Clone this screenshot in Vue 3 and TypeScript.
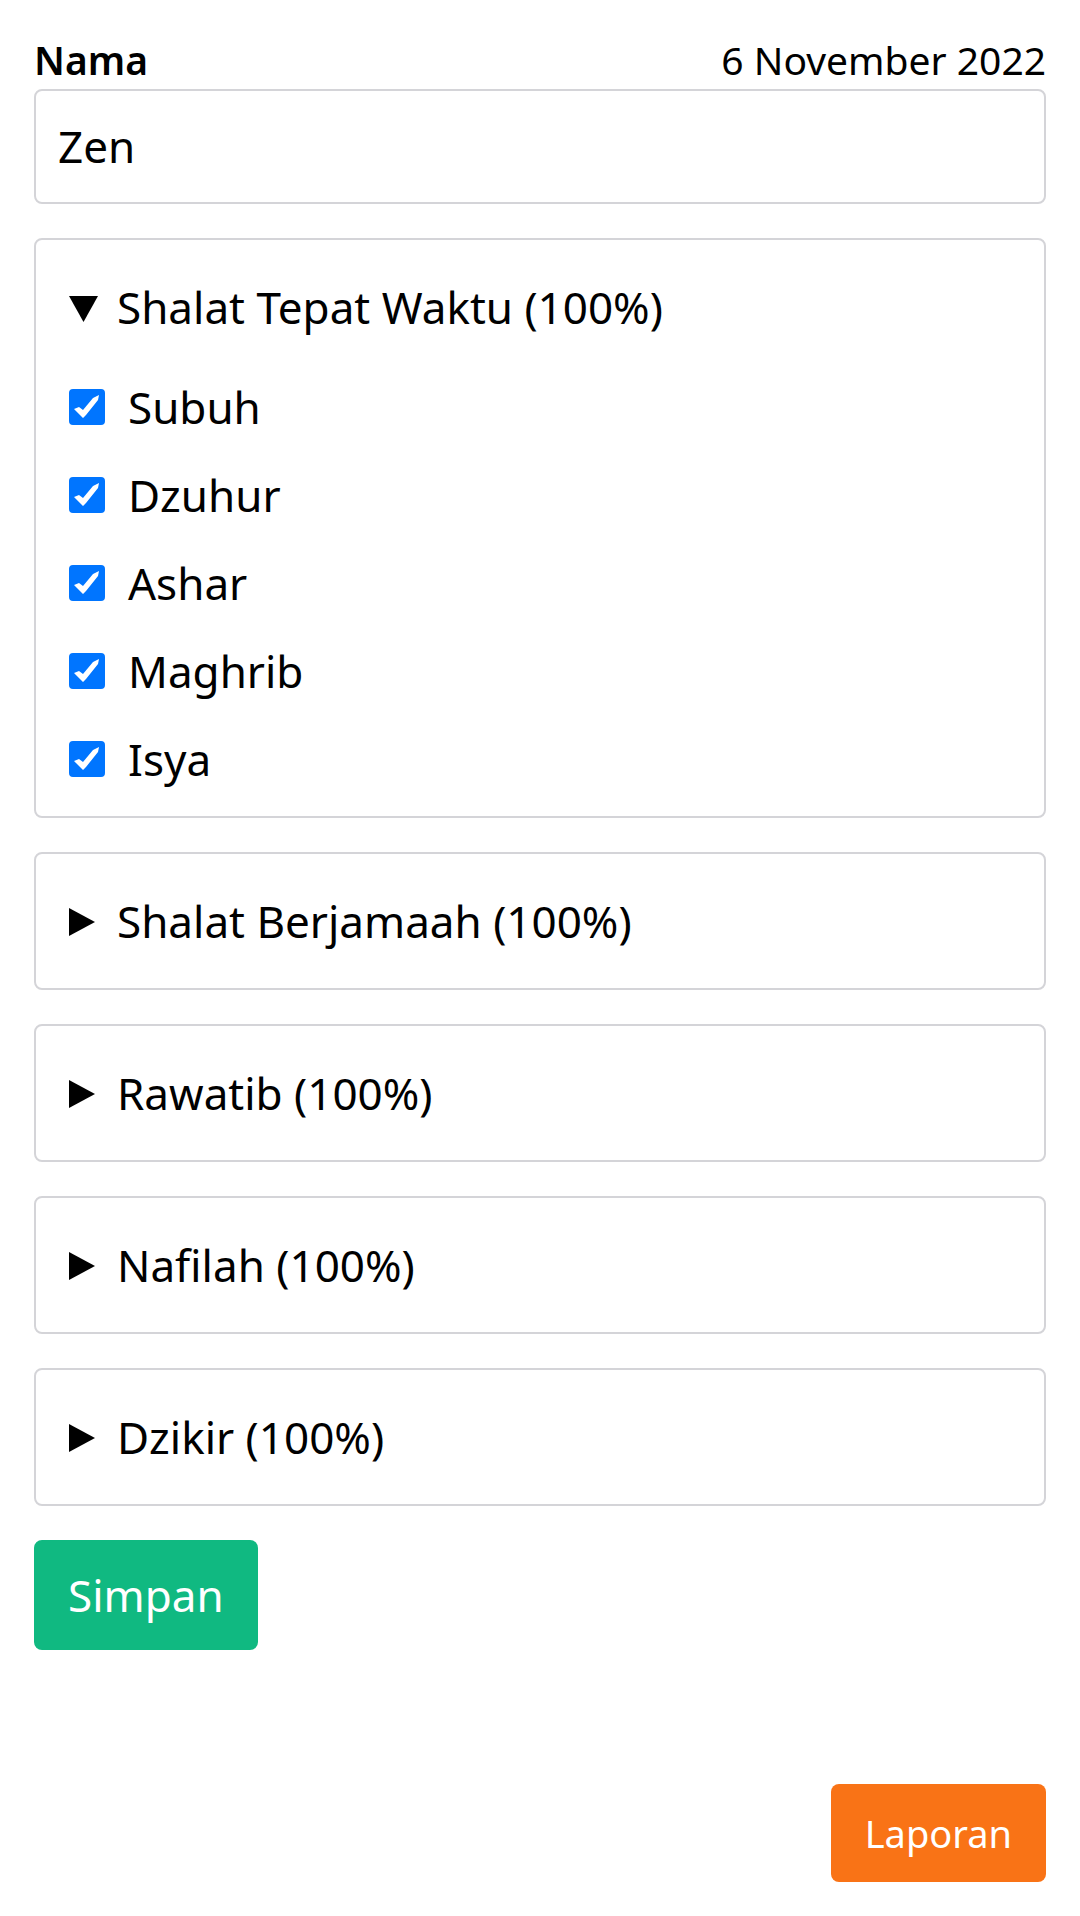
<script setup lang="ts">
import { reactive, ref } from 'vue'

interface Item {
  label: string
  done: boolean
}

interface Group {
  id: string
  title: string
  open: boolean
  items: Item[]
}

function makeItems(...labels: string[]): Item[] {
  return labels.map((label) => ({ label, done: true }))
}

const name = ref('Zen')

const groups = reactive<Group[]>([
  {
    id: 'tepat-waktu',
    title: 'Shalat Tepat Waktu',
    open: true,
    items: makeItems('Subuh', 'Dzuhur', 'Ashar', 'Maghrib', 'Isya'),
  },
  { id: 'berjamaah', title: 'Shalat Berjamaah', open: false, items: [] },
  { id: 'rawatib', title: 'Rawatib', open: false, items: [] },
  { id: 'nafilah', title: 'Nafilah', open: false, items: [] },
  { id: 'dzikir', title: 'Dzikir', open: false, items: [] },
])

function percent(group: Group): number {
  if (group.items.length === 0) return 100
  const done = group.items.filter((item) => item.done).length
  return Math.round((done / group.items.length) * 100)
}

function onToggle(group: Group, event: Event): void {
  group.open = (event.target as HTMLDetailsElement).open
}
</script>

<template>
  <main class="page">
    <form class="form" @submit.prevent>
      <div class="field">
        <div class="field-head">
          <label class="name-label" for="name">Nama</label>
          <time datetime="2022-11-06">6 November 2022</time>
        </div>
        <input id="name" v-model="name" class="name-input" type="text" autocomplete="off" />
      </div>

      <details
        v-for="group in groups"
        :key="group.id"
        class="card"
        :open="group.open"
        @toggle="onToggle(group, $event)"
      >
        <summary class="summary">
          <svg class="marker" viewBox="0 0 30 30" aria-hidden="true">
            <path v-if="group.open" d="M0 4H29L14.5 30Z" />
            <path v-else d="M0 2L26 16L0 30Z" />
          </svg>
          <span>{{ group.title }} ({{ percent(group) }}%)</span>
        </summary>
        <div v-if="group.items.length" class="items">
          <label v-for="item in group.items" :key="item.label" class="item">
            <span class="box">
              <input v-model="item.done" class="check" type="checkbox" />
              <svg class="tick" viewBox="0 0 36 36" aria-hidden="true">
                <path d="M5 20L10 18L14 21L24 9L30 6L29 11L17 26L14 29Z" />
              </svg>
            </span>
            <span>{{ item.label }}</span>
          </label>
        </div>
      </details>

      <button class="button save" type="submit">Simpan</button>
    </form>

    <button class="button report" type="button">Laporan</button>
  </main>
</template>

<style>
body {
  margin: 0;
  background: #fff;
}
</style>

<style scoped>
.page {
  box-sizing: border-box;
  display: flex;
  flex-direction: column;
  min-height: 100vh;
  padding: 33px 34px 34px;
  color: #000;
  font-family: 'Noto Sans', sans-serif;
  font-size: 44px;
  line-height: 66px;
}

.form {
  display: flex;
  flex-direction: column;
  gap: 34px;
}

.field {
  display: flex;
  flex-direction: column;
  gap: 2px;
}

.field-head {
  display: flex;
  justify-content: space-between;
  font-size: 39px;
  line-height: 54px;
}

.name-label {
  font-weight: 600;
}

.name-input {
  box-sizing: border-box;
  width: 100%;
  padding: 22px;
  border: 2px solid #d4d4d8;
  border-radius: 8px;
  outline: none;
  background: #fff;
  color: inherit;
  font: inherit;
  line-height: 67px;
}

.card {
  padding: 34px 33px;
  border: 2px solid #d4d4d8;
  border-radius: 8px;
}

.card[open] {
  padding-bottom: 24px;
}

.summary {
  display: flex;
  align-items: center;
  gap: 18px;
  list-style: none;
  cursor: pointer;
}

.summary::-webkit-details-marker {
  display: none;
}

.marker {
  flex: none;
  width: 30px;
  height: 30px;
  fill: #000;
}

.items {
  display: flex;
  flex-direction: column;
  gap: 22px;
  padding-top: 34px;
}

.item {
  display: flex;
  align-items: center;
  gap: 23px;
}

.box {
  display: grid;
  flex: none;
}

.check,
.tick {
  grid-area: 1 / 1;
  width: 36px;
  height: 36px;
  margin: 0;
}

.check {
  box-sizing: border-box;
  border: 2px solid #767676;
  border-radius: 4px;
  appearance: none;
  background: #fff;
}

.check:checked {
  border-color: #0075ff;
  background: #0075ff;
}

.tick {
  fill: #fff;
  pointer-events: none;
}

.check:not(:checked) + .tick {
  visibility: hidden;
}

.button {
  border: 0;
  border-radius: 8px;
  color: #fff;
  font-family: inherit;
  cursor: pointer;
}

.save {
  align-self: flex-start;
  padding: 22px 34px;
  background: #10b981;
  font-size: 44px;
  line-height: 66px;
}

.report {
  align-self: flex-end;
  margin-top: auto;
  padding: 22px 34px;
  background: #f97316;
  font-size: 38px;
  line-height: 54px;
}
</style>
